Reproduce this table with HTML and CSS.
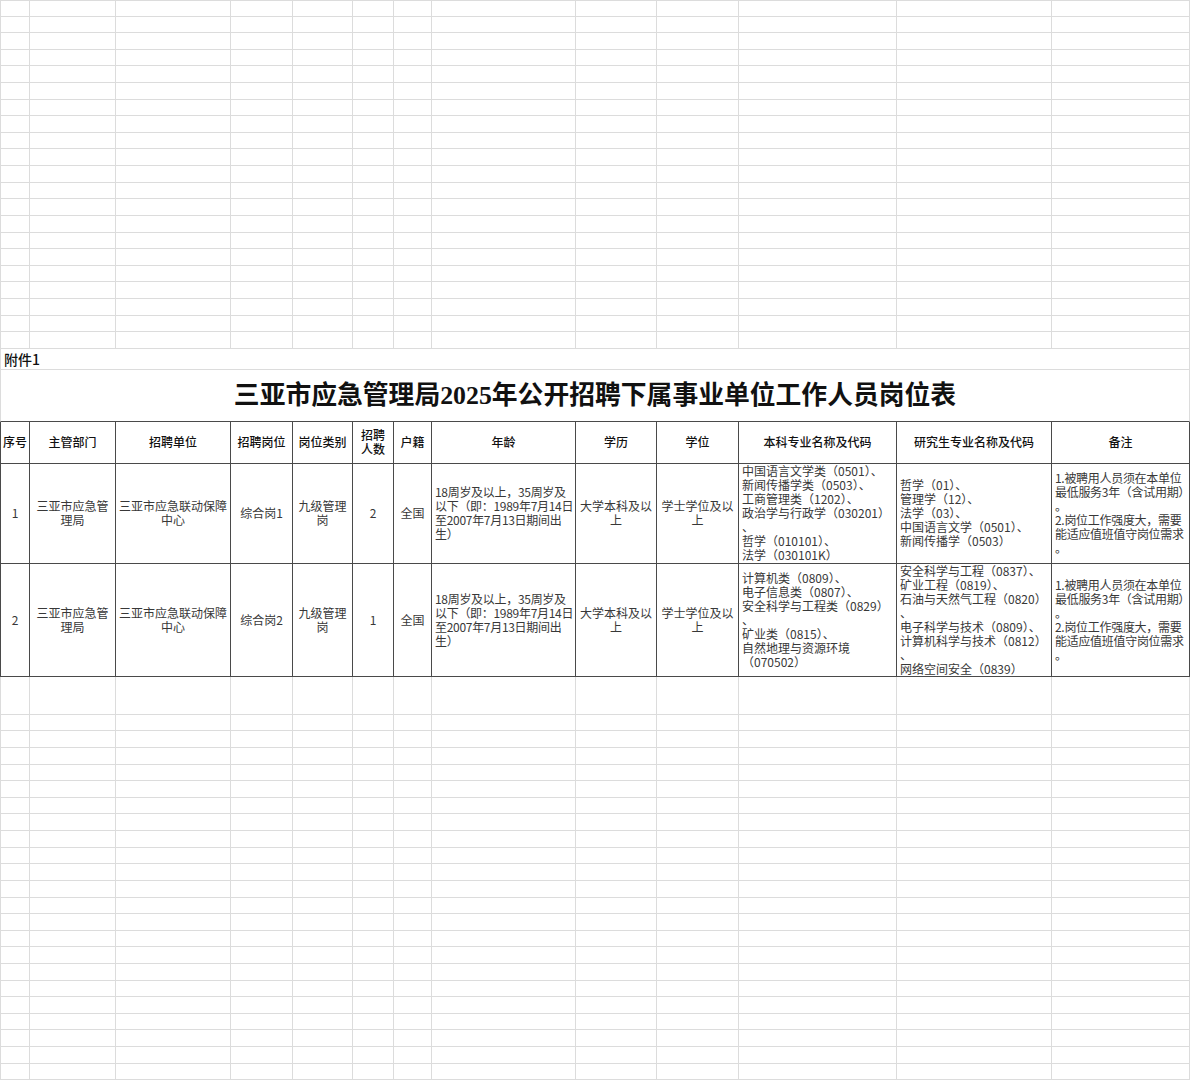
FILE: index.html
```html
<!DOCTYPE html>
<html lang="zh-CN">
<head>
<meta charset="utf-8">
<title>三亚市应急管理局2025年公开招聘下属事业单位工作人员岗位表</title>
<link rel="stylesheet" href="styles.css">
</head>
<body>
<table class="sheet">
<colgroup>
<col class="c1"><col class="c2"><col class="c3"><col class="c4"><col class="c5"><col class="c6"><col class="c7"><col class="c8"><col class="c9"><col class="c10"><col class="c11"><col class="c12"><col class="c13">
</colgroup>
<tbody>
<tr class="g first"><td></td><td></td><td></td><td></td><td></td><td></td><td></td><td></td><td></td><td></td><td></td><td></td><td></td></tr>
<tr class="g"><td></td><td></td><td></td><td></td><td></td><td></td><td></td><td></td><td></td><td></td><td></td><td></td><td></td></tr>
<tr class="g"><td></td><td></td><td></td><td></td><td></td><td></td><td></td><td></td><td></td><td></td><td></td><td></td><td></td></tr>
<tr class="g"><td></td><td></td><td></td><td></td><td></td><td></td><td></td><td></td><td></td><td></td><td></td><td></td><td></td></tr>
<tr class="g"><td></td><td></td><td></td><td></td><td></td><td></td><td></td><td></td><td></td><td></td><td></td><td></td><td></td></tr>
<tr class="g"><td></td><td></td><td></td><td></td><td></td><td></td><td></td><td></td><td></td><td></td><td></td><td></td><td></td></tr>
<tr class="g"><td></td><td></td><td></td><td></td><td></td><td></td><td></td><td></td><td></td><td></td><td></td><td></td><td></td></tr>
<tr class="g"><td></td><td></td><td></td><td></td><td></td><td></td><td></td><td></td><td></td><td></td><td></td><td></td><td></td></tr>
<tr class="g"><td></td><td></td><td></td><td></td><td></td><td></td><td></td><td></td><td></td><td></td><td></td><td></td><td></td></tr>
<tr class="g"><td></td><td></td><td></td><td></td><td></td><td></td><td></td><td></td><td></td><td></td><td></td><td></td><td></td></tr>
<tr class="g"><td></td><td></td><td></td><td></td><td></td><td></td><td></td><td></td><td></td><td></td><td></td><td></td><td></td></tr>
<tr class="g"><td></td><td></td><td></td><td></td><td></td><td></td><td></td><td></td><td></td><td></td><td></td><td></td><td></td></tr>
<tr class="g"><td></td><td></td><td></td><td></td><td></td><td></td><td></td><td></td><td></td><td></td><td></td><td></td><td></td></tr>
<tr class="g"><td></td><td></td><td></td><td></td><td></td><td></td><td></td><td></td><td></td><td></td><td></td><td></td><td></td></tr>
<tr class="g"><td></td><td></td><td></td><td></td><td></td><td></td><td></td><td></td><td></td><td></td><td></td><td></td><td></td></tr>
<tr class="g"><td></td><td></td><td></td><td></td><td></td><td></td><td></td><td></td><td></td><td></td><td></td><td></td><td></td></tr>
<tr class="g"><td></td><td></td><td></td><td></td><td></td><td></td><td></td><td></td><td></td><td></td><td></td><td></td><td></td></tr>
<tr class="g"><td></td><td></td><td></td><td></td><td></td><td></td><td></td><td></td><td></td><td></td><td></td><td></td><td></td></tr>
<tr class="g"><td></td><td></td><td></td><td></td><td></td><td></td><td></td><td></td><td></td><td></td><td></td><td></td><td></td></tr>
<tr class="g"><td></td><td></td><td></td><td></td><td></td><td></td><td></td><td></td><td></td><td></td><td></td><td></td><td></td></tr>
<tr class="g"><td></td><td></td><td></td><td></td><td></td><td></td><td></td><td></td><td></td><td></td><td></td><td></td><td></td></tr>
<tr class="r-note"><td colspan="13" class="note">附件1</td></tr>
<tr class="r-title"><td colspan="13" class="title">三亚市应急管理局2025年公开招聘下属事业单位工作人员岗位表</td></tr>
<tr class="r-head">
<th>序号</th><th>主管部门</th><th>招聘单位</th><th>招聘岗位</th><th>岗位类别</th><th>招聘<br>人数</th><th>户籍</th><th>年龄</th><th>学历</th><th>学位</th><th>本科专业名称及代码</th><th>研究生专业名称及代码</th><th>备注</th>
</tr>
<tr class="r-d1">
<td class="d">1</td>
<td class="d">三亚市应急管<br>理局</td>
<td class="d">三亚市应急联动保障<br>中心</td>
<td class="d">综合岗1</td>
<td class="d">九级管理<br>岗</td>
<td class="d">2</td>
<td class="d">全国</td>
<td class="d l tight">18周岁及以上，35周岁及<br>以下（即：1989年7月14日<br>至2007年7月13日期间出<br>生）</td>
<td class="d">大学本科及以<br>上</td>
<td class="d">学士学位及以<br>上</td>
<td class="d l">中国语言文学类（0501）、<br>新闻传播学类（0503）、<br>工商管理类（1202）、<br>政治学与行政学（030201）<br>、<br>哲学（010101）、<br>法学（030101K）</td>
<td class="d l">哲学（01）、<br>管理学（12）、<br>法学（03）、<br>中国语言文学（0501）、<br>新闻传播学（0503）</td>
<td class="d l tight">1.被聘用人员须在本单位<br>最低服务3年（含试用期）<br>。<br>2.岗位工作强度大，需要<br>能适应值班值守岗位需求<br>。</td>
</tr>
<tr class="r-d2">
<td class="d">2</td>
<td class="d">三亚市应急管<br>理局</td>
<td class="d">三亚市应急联动保障<br>中心</td>
<td class="d">综合岗2</td>
<td class="d">九级管理<br>岗</td>
<td class="d">1</td>
<td class="d">全国</td>
<td class="d l tight">18周岁及以上，35周岁及<br>以下（即：1989年7月14日<br>至2007年7月13日期间出<br>生）</td>
<td class="d">大学本科及以<br>上</td>
<td class="d">学士学位及以<br>上</td>
<td class="d l">计算机类（0809）、<br>电子信息类（0807）、<br>安全科学与工程类（0829）<br>、<br>矿业类（0815）、<br>自然地理与资源环境<br>（070502）</td>
<td class="d l">安全科学与工程（0837）、<br>矿业工程（0819）、<br>石油与天然气工程（0820）<br>、<br>电子科学与技术（0809）、<br>计算机科学与技术（0812）<br>、<br>网络空间安全（0839）</td>
<td class="d l tight">1.被聘用人员须在本单位<br>最低服务3年（含试用期）<br>。<br>2.岗位工作强度大，需要<br>能适应值班值守岗位需求<br>。</td>
</tr>
<tr class="gap"><td></td><td></td><td></td><td></td><td></td><td></td><td></td><td></td><td></td><td></td><td></td><td></td><td></td></tr>
<tr class="g"><td></td><td></td><td></td><td></td><td></td><td></td><td></td><td></td><td></td><td></td><td></td><td></td><td></td></tr>
<tr class="g"><td></td><td></td><td></td><td></td><td></td><td></td><td></td><td></td><td></td><td></td><td></td><td></td><td></td></tr>
<tr class="g"><td></td><td></td><td></td><td></td><td></td><td></td><td></td><td></td><td></td><td></td><td></td><td></td><td></td></tr>
<tr class="g"><td></td><td></td><td></td><td></td><td></td><td></td><td></td><td></td><td></td><td></td><td></td><td></td><td></td></tr>
<tr class="g"><td></td><td></td><td></td><td></td><td></td><td></td><td></td><td></td><td></td><td></td><td></td><td></td><td></td></tr>
<tr class="g"><td></td><td></td><td></td><td></td><td></td><td></td><td></td><td></td><td></td><td></td><td></td><td></td><td></td></tr>
<tr class="g"><td></td><td></td><td></td><td></td><td></td><td></td><td></td><td></td><td></td><td></td><td></td><td></td><td></td></tr>
<tr class="g"><td></td><td></td><td></td><td></td><td></td><td></td><td></td><td></td><td></td><td></td><td></td><td></td><td></td></tr>
<tr class="g"><td></td><td></td><td></td><td></td><td></td><td></td><td></td><td></td><td></td><td></td><td></td><td></td><td></td></tr>
<tr class="g"><td></td><td></td><td></td><td></td><td></td><td></td><td></td><td></td><td></td><td></td><td></td><td></td><td></td></tr>
<tr class="g"><td></td><td></td><td></td><td></td><td></td><td></td><td></td><td></td><td></td><td></td><td></td><td></td><td></td></tr>
<tr class="g"><td></td><td></td><td></td><td></td><td></td><td></td><td></td><td></td><td></td><td></td><td></td><td></td><td></td></tr>
<tr class="g"><td></td><td></td><td></td><td></td><td></td><td></td><td></td><td></td><td></td><td></td><td></td><td></td><td></td></tr>
<tr class="g"><td></td><td></td><td></td><td></td><td></td><td></td><td></td><td></td><td></td><td></td><td></td><td></td><td></td></tr>
<tr class="g"><td></td><td></td><td></td><td></td><td></td><td></td><td></td><td></td><td></td><td></td><td></td><td></td><td></td></tr>
<tr class="g"><td></td><td></td><td></td><td></td><td></td><td></td><td></td><td></td><td></td><td></td><td></td><td></td><td></td></tr>
<tr class="g"><td></td><td></td><td></td><td></td><td></td><td></td><td></td><td></td><td></td><td></td><td></td><td></td><td></td></tr>
<tr class="g"><td></td><td></td><td></td><td></td><td></td><td></td><td></td><td></td><td></td><td></td><td></td><td></td><td></td></tr>
<tr class="g"><td></td><td></td><td></td><td></td><td></td><td></td><td></td><td></td><td></td><td></td><td></td><td></td><td></td></tr>
<tr class="g"><td></td><td></td><td></td><td></td><td></td><td></td><td></td><td></td><td></td><td></td><td></td><td></td><td></td></tr>
<tr class="g"><td></td><td></td><td></td><td></td><td></td><td></td><td></td><td></td><td></td><td></td><td></td><td></td><td></td></tr>
<tr class="g"><td></td><td></td><td></td><td></td><td></td><td></td><td></td><td></td><td></td><td></td><td></td><td></td><td></td></tr>
</tbody>
</table>
</body>
</html>
```
FILE: styles.css
```css
html, body {
  margin: 0;
  padding: 0;
  background: #ffffff;
}
body {
  width: 1191px;
  height: 1080px;
  overflow: hidden;
  font-family: "Noto Sans CJK SC", "Noto Sans", sans-serif;
  font-size: 12px;
  color: #333333;
}
.sheet {
  table-layout: fixed;
  border-collapse: separate;
  border-spacing: 0;
  width: 1190px;
}
.c1 { width: 30px; }
.c2 { width: 86px; }
.c3 { width: 115px; }
.c4 { width: 62px; }
.c5 { width: 60px; }
.c6 { width: 41px; }
.c7 { width: 38px; }
.c8 { width: 144px; }
.c9 { width: 81px; }
.c10 { width: 82px; }
.c11 { width: 158px; }
.c12 { width: 155px; }
.c13 { width: 138px; }

.sheet td, .sheet th {
  border-right: 1px solid #dcdcdc;
  border-bottom: 1px solid #dcdcdc;
  padding: 0;
  box-sizing: border-box;
}
.sheet tr > :first-child {
  border-left: 1px solid #dcdcdc;
}
.sheet tr.first td {
  border-top: 1px solid #dcdcdc;
}
tr.g { height: 16.62px; }
tr.g td { height: 16.62px; }
tr.gap td { height: 38px; }

.note {
  height: 20px;
  padding: 0 0 0 3px !important;
  font-size: 14px;
  font-weight: 500;
  color: #111111;
  text-align: left;
  vertical-align: middle;
  line-height: 20px;
}
.title {
  height: 52px;
  text-align: center;
  vertical-align: middle;
  font-family: "Liberation Serif", "Noto Sans CJK SC", serif;
  font-size: 25.8px;
  font-weight: 700;
  color: #111111;
  line-height: 30px;
  padding-top: 2px !important;
  border-bottom: 1px solid #4a4a4a !important;
}
.r-head th {
  height: 42px;
  font-weight: 500;
  font-size: 12px;
  line-height: 14px;
  color: #111111;
  text-align: center;
  vertical-align: middle;
  border-right: 1px solid #4a4a4a;
  border-bottom: 1px solid #4a4a4a;
}
.r-head th:first-child { border-left: 1px solid #4a4a4a; }
.r-d1 td { height: 100px; }
.r-d2 td { height: 112px; }
td.d {
  border-right: 1px solid #4a4a4a;
  border-bottom: 1px solid #4a4a4a;
  text-align: center;
  vertical-align: middle;
  line-height: 14px;
  padding: 0 2px;
  white-space: nowrap;
  color: #383838;
}
tr > td.d:first-child { border-left: 1px solid #4a4a4a; }
td.d.l {
  text-align: left;
  padding-left: 3px;
}
td.d.tight {
  letter-spacing: -0.3px;
}
```
